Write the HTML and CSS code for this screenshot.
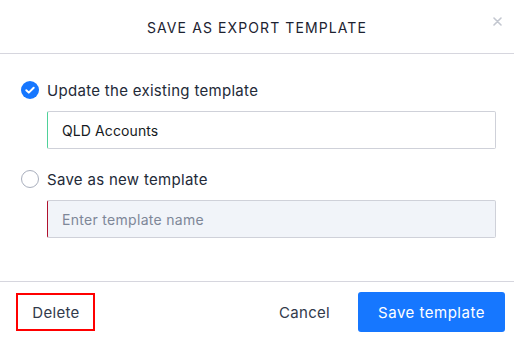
FILE: index.html
```html
<!DOCTYPE html>
<html lang="en">
<head>
    <meta charset="UTF-8">
    <meta name="viewport" content="width=device-width, initial-scale=1.0">
    <title>Save as export template</title>
    <link rel="stylesheet" href="styles.css">
</head>
<body>

    <div class="modal">
        <div class="modal-header">
            <h1>Save as export template</h1>
            <button class="close-btn" aria-label="Close">
                <svg width="9" height="9" viewBox="0 0 9 9">
                    <path d="M1 1 L8 8 M8 1 L1 8" stroke="#c3c7d0" stroke-width="1.6" stroke-linecap="round"/>
                </svg>
            </button>
        </div>

        <div class="modal-body">
            <label class="option">
                <span class="radio checked">
                    <svg width="18" height="18" viewBox="0 0 18 18">
                        <circle cx="9" cy="9" r="9" fill="#1677ff"/>
                        <path d="M5.3 9.2 L7.8 11.6 L12.7 6.7" fill="none" stroke="#fff" stroke-width="2" stroke-linecap="round" stroke-linejoin="round"/>
                    </svg>
                </span>
                Update the existing template
            </label>
            <div class="field field-valid">QLD Accounts</div>

            <label class="option option-second">
                <span class="radio"></span>
                Save as new template
            </label>
            <div class="field field-empty">Enter template name</div>
        </div>

        <div class="modal-footer">
            <button class="btn btn-delete">Delete</button>
            <div class="footer-right">
                <button class="btn btn-cancel">Cancel</button>
                <button class="btn btn-primary">Save template</button>
            </div>
        </div>
    </div>

</body>
</html>
```

FILE: styles.css
```css
body {
    font-family: Inter, "Liberation Sans", sans-serif;
    background-color: #fff;
    margin: 0;
    padding: 0;
    color: #1f2533;
}
.modal {
    width: 514px;
    height: 339px;
    display: flex;
    flex-direction: column;
    background: white;
}
.modal-header {
    position: relative;
    height: 53px;
    border-bottom: 1px solid #d6d6de;
    display: flex;
    align-items: center;
    justify-content: center;
}
.modal-header h1 {
    margin: 0;
    font-size: 14px;
    font-weight: 400;
    letter-spacing: 1.1px;
    text-transform: uppercase;
    color: #1c2230;
    padding-top: 1px;
}
.close-btn {
    position: absolute;
    top: 17px;
    right: 12px;
    border: none;
    background: none;
    padding: 0;
    width: 9px;
    height: 9px;
    display: flex;
    cursor: pointer;
}
.modal-body {
    flex: 1;
    padding: 26px 18px 0 21px;
}
.option {
    display: flex;
    align-items: center;
    gap: 8px;
    height: 20px;
    font-size: 15px;
    letter-spacing: 0.3px;
    color: #232a38;
    cursor: pointer;
}
.option-second {
    margin-top: 20px;
}
.radio {
    width: 18px;
    height: 18px;
    box-sizing: border-box;
    border-radius: 50%;
    border: 1px solid #a9afbd;
    display: flex;
}
.radio.checked {
    border: none;
}
.field {
    box-sizing: border-box;
    height: 38px;
    margin: 11px 0 0 26px;
    padding: 0 14px;
    display: flex;
    align-items: center;
    font-size: 14px;
    letter-spacing: 0.1px;
    border: 1px solid #cfd1d9;
    border-radius: 2px;
}
.field-valid {
    color: #161a22;
    border-left: 1px solid #4fd19a;
}
.field-empty {
    background: #f1f4f9;
    color: #7e8798;
    letter-spacing: 0.3px;
    border-left: 1px solid #b0122e;
}
.modal-footer {
    border-top: 1px solid #d6d6de;
    display: flex;
    justify-content: space-between;
    align-items: center;
    padding: 10px 9px 7px 16px;
}
.footer-right {
    display: flex;
    align-items: center;
    gap: 8px;
}
.btn {
    font-family: inherit;
    font-size: 15px;
    letter-spacing: 0.3px;
    border: none;
    background: none;
    cursor: pointer;
    border-radius: 3px;
}
.btn-delete {
    width: 79px;
    height: 38px;
    border: 2px solid #ff0000;
    border-radius: 0;
    color: #323a4b;
    padding: 0 0 0 1px;
}
.btn-cancel {
    height: 40px;
    padding: 0 20px;
    color: #323a4b;
}
.btn-primary {
    width: 147px;
    height: 40px;
    background: #1677ff;
    color: white;
    letter-spacing: 0.5px;
}
.btn-primary:hover {
    background: #0f66e0;
}
```
